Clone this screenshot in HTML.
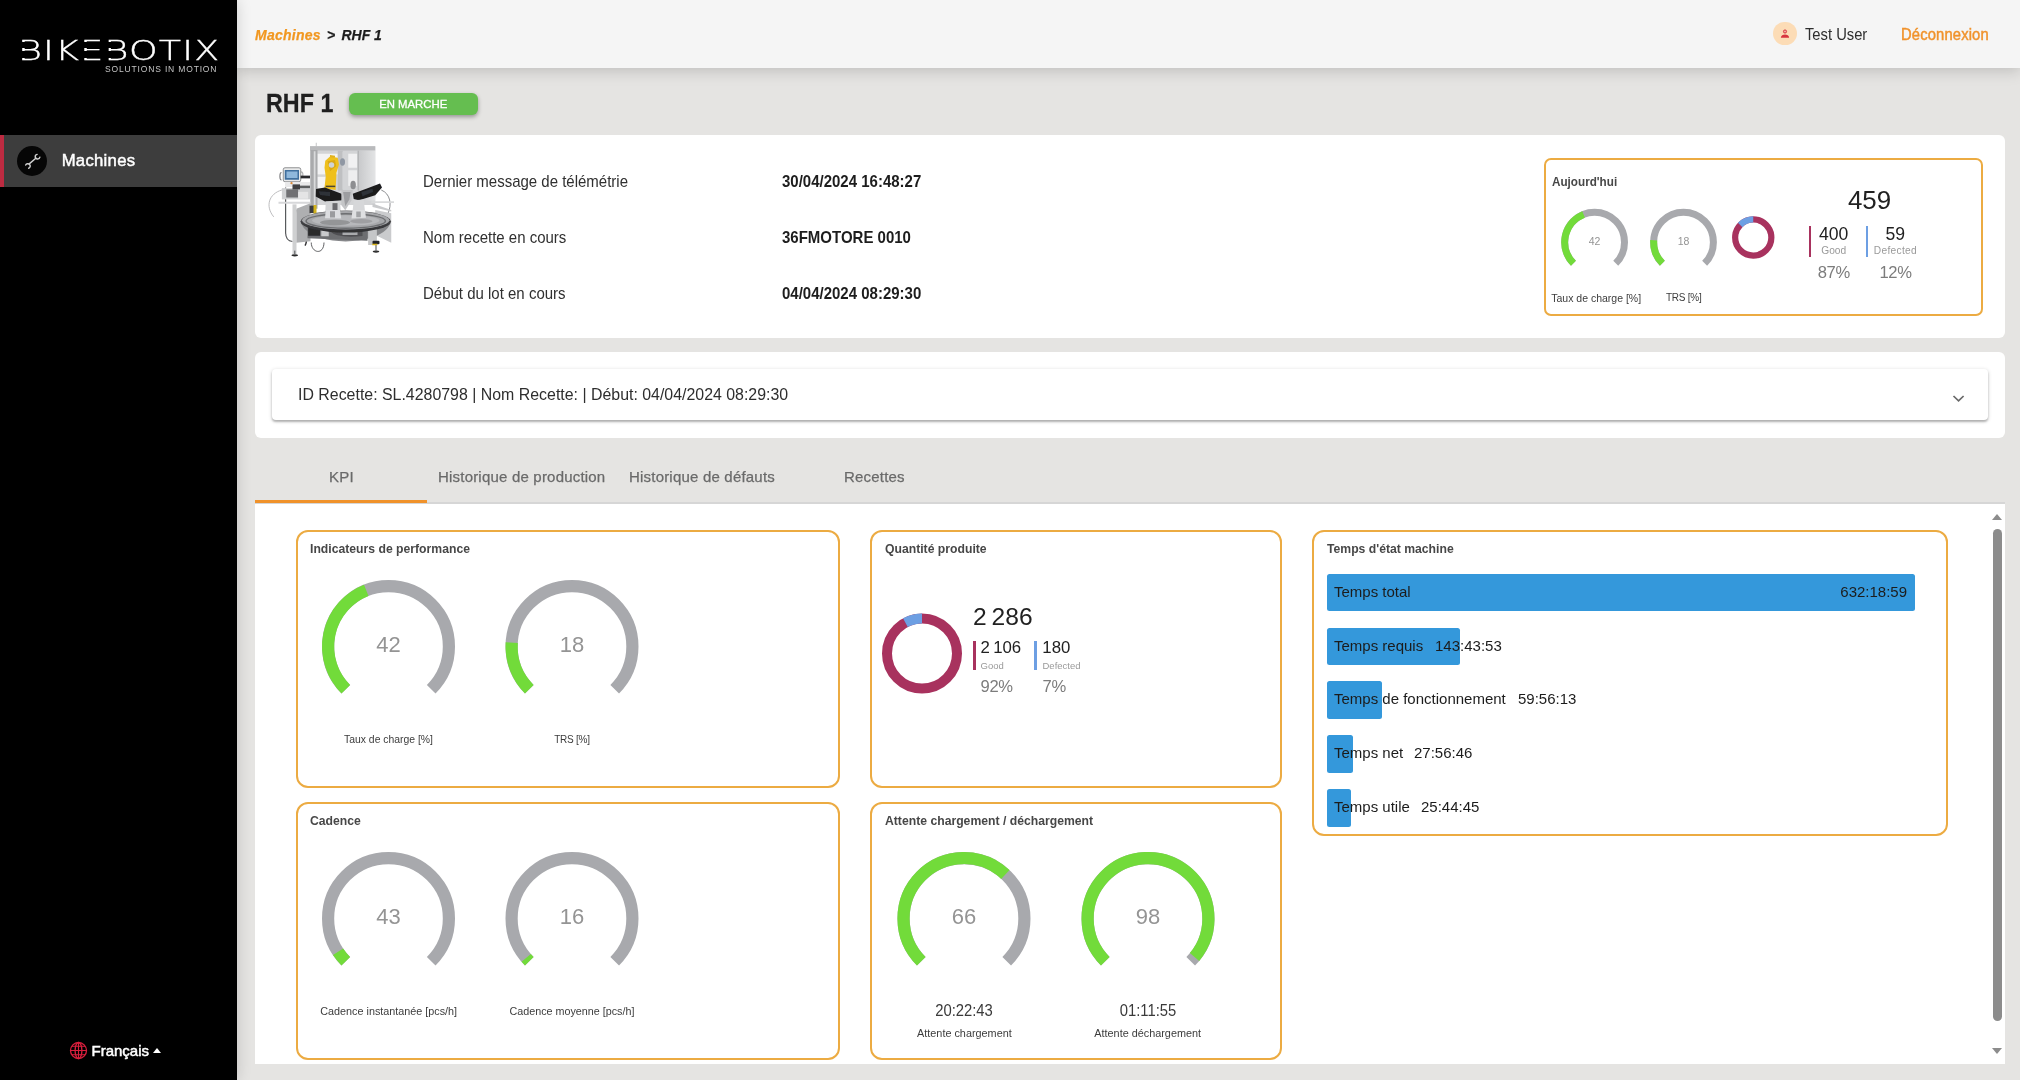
<!DOCTYPE html>
<html lang="fr">
<head>
<meta charset="utf-8">
<title>RHF 1 - Machines</title>
<style>
*{box-sizing:border-box;margin:0;padding:0}
html,body{width:2020px;height:1080px;overflow:hidden}
body{position:relative;background:#e5e4e2;font-family:"Liberation Sans",Arial,sans-serif;color:#212121}
.abs{position:absolute}
.t{position:absolute;white-space:nowrap;line-height:1}
/* sidebar */
#side{position:absolute;left:0;top:0;width:237px;height:1080px;background:#000;box-shadow:0 0 14px rgba(0,0,0,.16);z-index:5}
#navitem{position:absolute;left:0;top:135px;width:237px;height:52px;background:#3d3d3d;border-left:4px solid #bd2b41}
#navicon{position:absolute;left:17.2px;top:146px;width:30px;height:30px;border-radius:50%;background:#060606}
/* header */
#head{position:absolute;left:237px;top:0;width:1783px;height:68px;background:#f5f5f5;box-shadow:0 3px 14px rgba(0,0,0,.17);z-index:3}
.card{position:absolute;background:#fff;border-radius:6px}
.kc{position:absolute;border:2px solid #ecab42;border-radius:12px;background:#fff}
.kt{position:absolute;white-space:nowrap;line-height:1;font-size:12.8px;transform:scaleX(.953);transform-origin:0 50%;font-weight:bold;color:#474747}
.tab{font-size:15px;letter-spacing:.2px;color:#6a6a6a;-webkit-text-stroke:.25px #6a6a6a}
.i1{color:#303030}.i2{color:#1d1d1d}
.gl{font-size:10.5px;color:#3c3c3c;transform:translateX(-50%)}
.gv{font-size:16.2px;color:#3a3a3a;transform:translateX(-50%) scaleX(.915)}
.qn{font-size:18px;color:#212121}
.ql{font-size:9.5px;color:#9a9a9a}
.qp{font-size:16.6px;letter-spacing:-.3px;color:#7c7c7c}
.bar{position:absolute;left:1326.7px;height:37.8px;background:#3498db;border-radius:2.5px}
.bt{font-size:15px;color:#1c1c1c}
.tc{transform:translateX(-50%)}
</style>
</head>
<body>
<div id="root" style="position:absolute;left:0;top:0;width:2020px;height:1080px;will-change:transform">
<!-- SIDEBAR -->
<div id="side">
  <div id="navitem"></div>
  <div id="navicon"></div>

  <div class="t" id="logo" style="left:17.5px;top:37.5px;font-family:'DejaVu Sans Light','DejaVu Sans',sans-serif;font-weight:200;font-size:26px;letter-spacing:.9px;color:#fff;-webkit-text-stroke:.35px #fff;transform:scaleX(1.4);transform-origin:0 0">BIKEBOTIX</div>
  <div class="abs" style="left:21.4px;top:41.6px;width:3.8px;height:6.9px;background:#000"></div><div class="abs" style="left:21.4px;top:50.8px;width:3.8px;height:6.8px;background:#000"></div>
  <div class="abs" style="left:83.4px;top:41.6px;width:3.8px;height:6.9px;background:#000"></div><div class="abs" style="left:83.4px;top:50.8px;width:3.8px;height:6.8px;background:#000"></div>
  <div class="abs" style="left:107.4px;top:41.6px;width:3.8px;height:6.9px;background:#000"></div><div class="abs" style="left:107.4px;top:50.8px;width:3.8px;height:6.8px;background:#000"></div>
  <div class="t" id="tagline" style="left:105px;top:64.8px;font-size:8.5px;letter-spacing:.84px;color:#c4c4c4">SOLUTIONS IN MOTION</div>
  <svg class="abs" style="left:0;top:135px" width="60" height="52" viewBox="0 135 60 52" fill="none" stroke="#cfcfcf" stroke-width="1.55" stroke-linecap="round"><g transform="translate(32.7 161.6) scale(.92) translate(-32.7 -161.3)"><path d="M28.9 163.8 L36.1 157.7"/><path d="M37.5 153.5 A2.55 2.55 0 1 0 40.5 156.5"/><path d="M25.1 165.1 A2.55 2.55 0 1 1 28.3 168.5"/></g></svg>
  <div class="t" id="navtxt" style="left:61.7px;top:152.5px;font-size:16.7px;letter-spacing:.28px;color:#fff;-webkit-text-stroke:.45px #fff">Machines</div>
  <svg class="abs" style="left:68.7px;top:1040.8px" width="19" height="19" viewBox="0 0 19 19" fill="none" stroke="#d91f3d" stroke-width="1.3"><circle cx="9.5" cy="9.5" r="8"/><ellipse cx="9.5" cy="9.5" rx="3.4" ry="8"/><path d="M1.5 9.5h16M9.5 1.5v16M2.9 5.3h13.2M2.9 13.7h13.2" stroke-width="1.1"/></svg>
  <div class="t" id="lang" style="left:91.5px;top:1043px;font-size:15px;color:#fff;-webkit-text-stroke:.5px #fff">Français</div>
  <div class="abs" style="left:153px;top:1048px;width:0;height:0;border-left:4.5px solid transparent;border-right:4.5px solid transparent;border-bottom:5px solid #fff"></div>
</div>
<!-- HEADER -->
<div id="head">
  <div class="t" id="bc1" style="left:18px;top:26.9px;font-size:15.5px;letter-spacing:.28px;font-weight:bold;font-style:italic;color:#f19720;-webkit-text-stroke:.25px #f19720;transform:scaleX(.903);transform-origin:0 50%">Machines</div>
  <div class="t" id="bc2" style="left:90.3px;top:26.9px;font-size:15.5px;font-weight:bold;font-style:italic;color:#1d1d1d;-webkit-text-stroke:.25px #1d1d1d;transform:scaleX(.903);transform-origin:0 50%"><span style="margin-right:2.6px">&gt;</span> RHF 1</div>
  <div class="abs" id="avatar" style="left:1536.3px;top:21.5px;width:23.4px;height:23.4px;border-radius:50%;background:#fcdcb6"></div>
  <svg class="abs" style="left:1542px;top:28px" width="12" height="12" viewBox="0 0 12 12"><circle cx="6" cy="3.5" r="1.55" fill="#f3a9a0" stroke="#d8353f" stroke-width="1"/><path d="M1.9 9.8 C1.9 7.2 4 6.4 6 6.4 C8 6.4 10.1 7.2 10.1 9.8 Z" fill="#d8353f"/></svg>
  <div class="t" id="user" style="transform:scaleX(0.94);transform-origin:0 50%;left:1568.3px;top:26.6px;font-size:15.7px;color:#2e2e2e">Test User</div>
  <div class="t" id="logout" style="transform:scaleX(0.94);transform-origin:0 50%;left:1663.6px;top:26.6px;font-size:15.7px;letter-spacing:.17px;color:#f0922b;-webkit-text-stroke:.45px #f0922b">Déconnexion</div>
</div>
<!-- CARDS -->
<div class="card" id="c1" style="left:255px;top:135px;width:1750px;height:203px"></div>
<div class="card" id="c2" style="left:255px;top:352px;width:1750px;height:86px"></div>
<div class="card" id="c3" style="left:255px;top:504px;width:1750px;height:560px;border-radius:0"></div>

<!-- TITLE -->
<div class="t" id="title" style="left:265.5px;top:89.9px;font-size:26.2px;font-weight:bold;color:#1f1f1f;-webkit-text-stroke:.3px #1f1f1f;transform:scaleX(.89);transform-origin:0 50%">RHF 1</div>
<div class="abs" id="badge" style="left:349px;top:93px;width:129px;height:21.5px;border-radius:6px;background:#65be50;box-shadow:0 2px 4px rgba(0,0,0,.35)"></div>
<div class="t" id="badgetxt" style="left:379.2px;top:98.9px;font-size:11.35px;color:#fff;-webkit-text-stroke:.3px #fff">EN MARCHE</div>

<!-- CARD 1 -->
<div class="t i1" style="transform:scaleX(0.94);transform-origin:0 50%;left:423px;top:173.6px;font-size:15.96px">Dernier message de télémétrie</div>
<div class="t i1" style="transform:scaleX(0.94);transform-origin:0 50%;left:423px;top:229.6px;font-size:15.96px">Nom recette en cours</div>
<div class="t i1" style="transform:scaleX(0.94);transform-origin:0 50%;left:423px;top:285.6px;font-size:15.96px">Début du lot en cours</div>
<div class="t i2" style="transform:scaleX(0.94);transform-origin:0 50%;left:782px;top:173.6px;font-size:15.96px;font-weight:bold">30/04/2024 16:48:27</div>
<div class="t i2" style="transform:scaleX(0.94);transform-origin:0 50%;left:782px;top:229.6px;font-size:15.96px;font-weight:bold">36FMOTORE 0010</div>
<div class="t i2" style="transform:scaleX(0.94);transform-origin:0 50%;left:782px;top:285.6px;font-size:15.96px;font-weight:bold">04/04/2024 08:29:30</div>

<!--MACHINE-->
<svg class="abs" id="machine" style="left:255px;top:135px" width="160" height="135" viewBox="0 0 1280 1080">
<defs><filter id="mb" x="-5%" y="-5%" width="110%" height="110%"><feGaussianBlur stdDeviation="3"/></filter>
<linearGradient id="mg1" x1="0" y1="0" x2="1" y2="0"><stop offset="0" stop-color="#c9cacc"/><stop offset="1" stop-color="#e3e4e5"/></linearGradient>
<linearGradient id="mg2" x1="0" y1="0" x2="0" y2="1"><stop offset="0" stop-color="#58585b"/><stop offset="1" stop-color="#2e2e31"/></linearGradient>
</defs>
<g filter="url(#mb)">
<!-- cables -->
<g fill="none" stroke="#8d8e91" stroke-width="7">
<path d="M215 440 C110 470 80 570 150 655" stroke="#b3b4b6"/>
<path d="M245 420 L245 780 C245 835 275 850 300 852" stroke="#4e4f52" stroke-width="9"/>
<path d="M330 600 C300 700 305 820 318 940" stroke="#6b6c6f" stroke-width="8"/>
<path d="M1010 440 C1085 470 1095 560 1065 625" stroke="#7d7e81"/>
<path d="M450 860 C450 945 550 965 552 860" stroke="#4a4b4e"/>
<path d="M340 805 C400 795 425 840 400 885" stroke="#2e2e30" stroke-width="11"/>
</g>
<!-- frame -->
<rect x="486" y="62" width="8" height="40" fill="#c5c6c8"/>
<rect x="440" y="90" width="522" height="470" fill="#d3d4d6"/>
<rect x="440" y="90" width="522" height="34" fill="#b9babc"/>
<rect x="444" y="120" width="56" height="470" fill="#a9aaac"/>
<rect x="470" y="130" width="14" height="440" fill="#d9dadb"/>
<rect x="502" y="150" width="160" height="165" fill="#f3f3f4"/>
<rect x="502" y="335" width="62" height="90" fill="#f4f4f5"/>
<rect x="662" y="125" width="40" height="320" fill="#bfc0c2"/>
<rect x="700" y="135" width="44" height="300" fill="#d3d4d6"/>
<rect x="746" y="150" width="72" height="112" fill="#f1f1f2"/>
<rect x="746" y="282" width="72" height="125" fill="#eeeeef"/>
<rect x="820" y="125" width="14" height="320" fill="#b4b5b7"/>
<rect x="834" y="125" width="128" height="400" fill="url(#mg1)"/>
<!-- robot -->
<path d="M562 205 L600 172 L662 182 L672 235 L652 300 L645 440 L555 425 L566 335 L556 262 Z" fill="#efc01e"/>
<path d="M580 210 L640 200 L650 250 L600 290 Z" fill="#d9a915"/>
<circle cx="612" cy="240" r="22" fill="#cfd3d6"/>
<path d="M600 160 L640 165 L640 182 L600 178 Z" fill="#e2b21a"/>
<ellipse cx="700" cy="215" rx="20" ry="30" fill="#8f97a3"/>
<rect x="566" y="405" width="76" height="12" fill="#4b4430"/>
<!-- HMI -->
<path d="M212 300 C195 300 195 360 212 360" fill="none" stroke="#77787b" stroke-width="9"/>
<path d="M368 295 C388 295 388 340 368 340" fill="none" stroke="#b5b6b8" stroke-width="10"/>
<rect x="226" y="262" width="140" height="112" rx="14" fill="#e9eaeb" stroke="#6f7073" stroke-width="6"/>
<rect x="238" y="280" width="114" height="78" fill="#3f6f9e"/>
<rect x="252" y="292" width="88" height="52" fill="#8fb8dc"/>
<rect x="240" y="376" width="200" height="40" fill="#e9e9ea"/>
<circle cx="292" cy="385" r="9" fill="#d88a3a"/>
<rect x="365" y="325" width="75" height="22" fill="#2c2c2e"/>
<rect x="330" y="405" width="110" height="50" fill="#5d5e61"/>
<rect x="215" y="425" width="225" height="90" fill="#cfd0d2"/>
<rect x="250" y="435" width="95" height="65" fill="#6f7073"/><rect x="300" y="395" width="60" height="40" fill="#3f4043"/>
<rect x="345" y="455" width="80" height="55" fill="#e4e4e5"/>
<!-- left table and panel -->
<rect x="188" y="534" width="255" height="16" fill="#d7d8da"/>
<path d="M330 590 L444 545 L444 850 L330 862 Z" fill="#aeafb1"/>
<rect x="300" y="555" width="32" height="400" fill="#cfd0d1"/>
<rect x="436" y="565" width="36" height="60" fill="#3a3a3c"/>
<rect x="468" y="560" width="24" height="70" fill="#d2b21c"/>
<!-- right shelf and panel -->
<rect x="930" y="530" width="182" height="14" fill="#d9dadb"/>
<path d="M940 548 L1090 600 L1090 612 L940 575 Z" fill="#c9cacc"/>
<path d="M962 600 L1090 625 L1090 862 L962 800 Z" fill="#cacbcd"/>
<!-- trays -->
<path d="M488 432 L560 420 L692 470 L702 522 L560 532 L486 492 Z" fill="#1b1b1e"/>
<path d="M782 470 L900 425 L1000 388 L1016 420 L962 482 L832 522 L790 512 Z" fill="#1b1b1e"/>
<path d="M510 450 L600 455 L600 490 L520 480 Z" fill="#2d3138"/>
<path d="M850 455 L940 430 L945 455 L860 490 Z" fill="#2d3138"/>
<path d="M692 440 L782 440 L772 522 L722 602 L690 560 Z" fill="#c4c5c7"/>
<path d="M705 455 L765 455 L755 515 L722 570 Z" fill="#9d9ea1"/>
<ellipse cx="785" cy="400" rx="22" ry="34" fill="#8d8e91"/>
<path d="M566 532 L680 528 L690 665 L560 660 Z" fill="#d3d4d6"/>
<path d="M790 522 L870 515 L885 660 L775 665 Z" fill="#d6d7d9"/>
<rect x="620" y="545" width="40" height="100" fill="#6a6b6e"/>
<!-- round table -->
<path d="M366 690 C380 775 500 845 725 852 C950 845 1075 775 1086 690 Z" fill="#86878a"/>
<path d="M420 720 L900 720 L900 846 L420 826 Z" fill="#6d6e71"/>
<rect x="425" y="728" width="95" height="78" fill="#29292c"/>
<rect x="530" y="740" width="60" height="70" fill="#c9cacc"/>
<path d="M590 745 C600 800 700 826 860 808 L860 762 L720 745 Z" fill="#4f4f52"/>
<rect x="700" y="760" width="120" height="40" fill="#a9aaad"/>
<rect x="905" y="730" width="70" height="150" fill="#c5c6c8"/>
<ellipse cx="726" cy="692" rx="362" ry="88" fill="url(#mg2)"/>
<ellipse cx="726" cy="682" rx="350" ry="74" fill="#a6a7aa"/>
<ellipse cx="726" cy="688" rx="318" ry="58" fill="none" stroke="#5a5b5e" stroke-width="12" opacity=".75"/>
<ellipse cx="726" cy="684" rx="270" ry="42" fill="#b7b8bb"/>
<ellipse cx="640" cy="700" rx="120" ry="22" fill="#8b8c8f" opacity=".8"/>
<ellipse cx="850" cy="690" rx="90" ry="18" fill="#98999c" opacity=".8"/>
<path d="M566 600 L680 600 L690 668 L560 665 Z" fill="#dcdde0"/>
<path d="M780 600 L880 600 L888 662 L772 668 Z" fill="#dfe0e2"/>
<rect x="600" y="610" width="40" height="50" fill="#9a9b9e"/>
<rect x="810" y="612" width="36" height="46" fill="#a3a4a7"/>
<!-- feet -->
<ellipse cx="318" cy="962" rx="26" ry="9" fill="#2a2a2c"/>
<rect x="313" y="925" width="10" height="35" fill="#6d6e70"/>
<ellipse cx="968" cy="932" rx="26" ry="9" fill="#2a2a2c"/>
<rect x="963" y="880" width="10" height="50" fill="#6d6e70"/>
<rect x="940" y="845" width="56" height="28" rx="8" fill="#242426"/>
<rect x="938" y="870" width="40" height="12" fill="#d9b51d"/>
</g>
</svg>
<!--/MACHINE-->
<!-- TODAY CARD -->
<div class="kc" id="today" style="left:1544px;top:158px;width:439px;height:158px;border-radius:7px"></div>
<div class="kt" style="left:1551.7px;top:176.30px;font-size:12.8px;transform:scaleX(.914)">Aujourd'hui</div>
<div class="t" id="t0" style="left:1869.50px;top:188.30px;font-size:25.9px;color:#212121;transform:translateX(-50%)">459</div>
<div class="abs" style="left:1808.9px;top:225.7px;width:2.4px;height:31.6px;background:#a8325e"></div>
<div class="abs" style="left:1866px;top:225.7px;width:2.2px;height:31.6px;background:#6d9fe3"></div>
<div class="t qn tc" id="t1" style="left:1833.60px;top:225.80px;font-size:17.6px">400</div>
<div class="t qn tc" id="t2" style="left:1895.30px;top:225.80px;font-size:17.6px">59</div>
<div class="t ql tc" id="t3" style="left:1833.70px;top:246.30px;font-size:10.2px">Good</div>
<div class="t ql tc" id="t4" style="letter-spacing:.3px;left:1895.40px;top:246.30px;font-size:10.2px">Defected</div>
<div class="t qp tc" id="t5" style="left:1833.80px;top:265.10px">87%</div>
<div class="t qp tc" id="t6" style="left:1895.60px;top:265.10px">12%</div>
<div class="t gl" id="t7" style="left:1596.20px;top:292.80px">Taux de charge [%]</div>
<div class="t gl" id="t8" style="left:1683.70px;top:293.25px;font-size:10px;letter-spacing:-.25px">TRS [%]</div>


<!-- ACCORDION -->
<div class="abs" id="acc" style="left:272px;top:369px;width:1716px;height:51px;background:#fff;border-radius:4px;box-shadow:0 2px 2px rgba(0,0,0,.22),0 1px 4px rgba(0,0,0,.18)"></div>
<div class="t" id="acctxt" style="transform:scaleX(1.02);transform-origin:0 50%;left:297.6px;top:386.6px;font-size:15.6px;color:#2e2e2e">ID Recette: SL.4280798 | Nom Recette: | Début: 04/04/2024 08:29:30</div>
<svg class="abs" style="left:1951px;top:392px" width="16" height="12" viewBox="0 0 16 12"><path d="M2.5 4 L7.55 8.9 L12.6 4" fill="none" stroke="#686868" stroke-width="1.7"/></svg>

<!-- TABS -->
<div class="abs" style="left:255px;top:502px;width:1750px;height:2px;background:#d6d6d6"></div>
<div class="abs" style="left:255px;top:500px;width:172px;height:3px;background:#f0922b"></div>
<div class="t tab" style="left:329px;top:469.1px">KPI</div>
<div class="t tab" style="left:438px;top:469.1px">Historique de production</div>
<div class="t tab" style="left:629px;top:469.1px">Historique de défauts</div>
<div class="t tab" style="left:844px;top:469.1px">Recettes</div>

<!-- KPI CARDS -->
<div class="kc" style="left:296px;top:530px;width:544px;height:258px"></div>
<div class="kc" style="left:296px;top:802px;width:544px;height:258px"></div>
<div class="kc" style="left:870px;top:530px;width:412px;height:258px"></div>
<div class="kc" style="left:870px;top:802px;width:412px;height:258px"></div>
<div class="kc" style="left:1312px;top:530px;width:636px;height:306px"></div>
<div class="kt" id="kt1" style="left:310px;top:543.00px">Indicateurs de performance</div>
<div class="kt" id="kt2" style="left:310px;top:815.00px">Cadence</div>
<div class="kt" id="kt3" style="left:885px;top:543.00px">Quantité produite</div>
<div class="kt" id="kt4" style="left:885px;top:815.00px">Attente chargement / déchargement</div>
<div class="kt" id="kt5" style="left:1327px;top:543.00px">Temps d'état machine</div>
<!-- gauge labels -->
<div class="t gl" style="left:388.5px;top:734.8px;font-size:10.4px">Taux de charge [%]</div>
<div class="t gl" style="left:572px;top:735.15px;font-size:10px;letter-spacing:-.25px">TRS [%]</div>
<div class="t gl" style="left:388.7px;top:1006px;font-size:10.8px">Cadence instantanée [pcs/h]</div>
<div class="t gl" style="left:572px;top:1006px;font-size:10.75px">Cadence moyenne [pcs/h]</div>
<div class="t gl" style="left:964.4px;top:1027.7px;font-size:10.85px">Attente chargement</div>
<div class="t gl" style="left:1147.7px;top:1027.7px;font-size:10.85px">Attente déchargement</div>
<div class="t gv" style="left:964px;top:1001.8px">20:22:43</div>
<div class="t gv" style="left:1148px;top:1001.8px">01:11:55</div>
<!-- quantity -->
<div class="t" id="q0" style="left:973.00px;top:605.20px;font-size:24.6px;color:#212121">2&#8239;286</div>
<div class="abs" style="left:973px;top:640.7px;width:2.8px;height:29.2px;background:#a8325e"></div>
<div class="abs" style="left:1034.2px;top:640.7px;width:2.7px;height:29.2px;background:#6d9fe3"></div>
<div class="t qn" id="q1" style="left:980.50px;top:640.30px;font-size:16.8px">2&#8239;106</div>
<div class="t qn" id="q2" style="left:1042.30px;top:640.30px;font-size:16.8px">180</div>
<div class="t ql" id="q3" style="left:980.5px;top:660.5px">Good</div>
<div class="t ql" id="q4" style="left:1042.5px;top:660.5px">Defected</div>
<div class="t qp" id="q5" style="left:980.50px;top:679.40px">92%</div>
<div class="t qp" id="q6" style="left:1042.50px;top:679.40px">7%</div>
<!-- time bars -->
<div class="bar" style="top:573.7px;width:588.5px"></div>
<div class="bar" style="top:627.5px;width:133.7px"></div>
<div class="bar" style="top:681.3px;width:55.8px"></div>
<div class="bar" style="top:735.1px;width:26px"></div>
<div class="bar" style="top:788.9px;width:24px"></div>
<div class="t bt" id="b1" style="left:1334px;top:583.9px">Temps total</div>
<div class="t bt" id="b1v" style="left:1840.3px;top:583.9px">632:18:59</div>
<div class="t bt" id="b2" style="left:1334px;top:637.6px">Temps requis</div>
<div class="t bt" id="b2v" style="left:1435px;top:637.6px">143:43:53</div>
<div class="t bt" id="b3" style="left:1334px;top:691.4px">Temps de fonctionnement</div>
<div class="t bt" id="b3v" style="left:1518px;top:691.4px">59:56:13</div>
<div class="t bt" id="b4" style="left:1334px;top:745.1px">Temps net</div>
<div class="t bt" id="b4v" style="left:1414px;top:745.1px">27:56:46</div>
<div class="t bt" id="b5" style="left:1334px;top:798.9px">Temps utile</div>
<div class="t bt" id="b5v" style="left:1421px;top:798.9px">25:44:45</div>
<!-- scrollbar -->
<div class="abs" style="left:1993px;top:529px;width:9px;height:492px;border-radius:5px;background:#8c8c8c"></div>
<div class="abs" style="left:1992px;top:514px;width:0;height:0;border-left:5.5px solid transparent;border-right:5.5px solid transparent;border-bottom:6px solid #8c8c8c"></div>
<div class="abs" style="left:1992px;top:1048px;width:0;height:0;border-left:5.5px solid transparent;border-right:5.5px solid transparent;border-top:6px solid #8c8c8c"></div>
<svg class="abs" id="kpisvg" style="left:0;top:0" width="2020" height="1080" viewBox="0 0 2020 1080" font-family="'Liberation Sans',Arial,sans-serif">
<path d="M345.79 689.21A60.4 60.4 0 1 1 431.21 689.21" stroke="#a8a9ad" stroke-width="12.2" fill="none"/><path d="M345.79 689.21A60.4 60.4 0 0 1 366.27 590.34" stroke="#72db3a" stroke-width="12.2" fill="none"/><text x="388.5" y="651.9" font-size="22" fill="#949494" text-anchor="middle">42</text>
<path d="M529.29 689.21A60.4 60.4 0 1 1 614.71 689.21" stroke="#a8a9ad" stroke-width="12.2" fill="none"/><path d="M529.29 689.21A60.4 60.4 0 0 1 511.72 642.71" stroke="#72db3a" stroke-width="12.2" fill="none"/><text x="572" y="651.9" font-size="22" fill="#949494" text-anchor="middle">18</text>
<path d="M345.79 961.21A60.4 60.4 0 1 1 431.21 961.21" stroke="#a8a9ad" stroke-width="12.2" fill="none"/><path d="M345.79 961.21A60.4 60.4 0 0 1 338.07 951.74" stroke="#72db3a" stroke-width="12.2" fill="none"/><text x="388.5" y="923.9" font-size="22" fill="#949494" text-anchor="middle">43</text>
<path d="M529.29 961.21A60.4 60.4 0 1 1 614.71 961.21" stroke="#a8a9ad" stroke-width="12.2" fill="none"/><path d="M529.29 961.21A60.4 60.4 0 0 1 526.19 957.87" stroke="#72db3a" stroke-width="12.2" fill="none"/><text x="572" y="923.9" font-size="22" fill="#949494" text-anchor="middle">16</text>
<path d="M921.29 961.21A60.4 60.4 0 1 1 1006.71 961.21" stroke="#a8a9ad" stroke-width="12.2" fill="none"/><path d="M921.29 961.21A60.4 60.4 0 0 1 1005.35 874.47" stroke="#72db3a" stroke-width="12.2" fill="none"/><text x="964" y="923.9" font-size="22" fill="#949494" text-anchor="middle">66</text>
<path d="M1105.29 961.21A60.4 60.4 0 1 1 1190.71 961.21" stroke="#a8a9ad" stroke-width="12.2" fill="none"/><path d="M1105.29 961.21A60.4 60.4 0 1 1 1194.54 957.00" stroke="#72db3a" stroke-width="12.2" fill="none"/><text x="1148" y="923.9" font-size="22" fill="#949494" text-anchor="middle">98</text>
<circle cx="922" cy="653.5" r="35" stroke="#a8325e" stroke-width="10" fill="none"/><path d="M905.38 622.70A35 35 0 0 1 922.00 618.50" stroke="#6d9fe3" stroke-width="10" fill="none"/>
<path d="M1573.46 263.34A29.9 29.9 0 1 1 1615.74 263.34" stroke="#a8a9ad" stroke-width="7" fill="none"/><path d="M1573.46 263.34A29.9 29.9 0 0 1 1583.59 214.40" stroke="#72db3a" stroke-width="7" fill="none"/><text x="1594.6" y="245.0" font-size="10.5" fill="#949494" text-anchor="middle">42</text>
<path d="M1662.36 263.34A29.9 29.9 0 1 1 1704.64 263.34" stroke="#a8a9ad" stroke-width="7" fill="none"/><path d="M1662.36 263.34A29.9 29.9 0 0 1 1653.66 240.32" stroke="#72db3a" stroke-width="7" fill="none"/><text x="1683.5" y="245.0" font-size="10.5" fill="#949494" text-anchor="middle">18</text>
<circle cx="1753.25" cy="237.5" r="18.1" stroke="#a8325e" stroke-width="6.2" fill="none"/><path d="M1740.17 224.99A18.1 18.1 0 0 1 1753.25 219.40" stroke="#6d9fe3" stroke-width="6.2" fill="none"/>
</svg>
<!--SECTIONS-->
</div>
</body>
</html>
